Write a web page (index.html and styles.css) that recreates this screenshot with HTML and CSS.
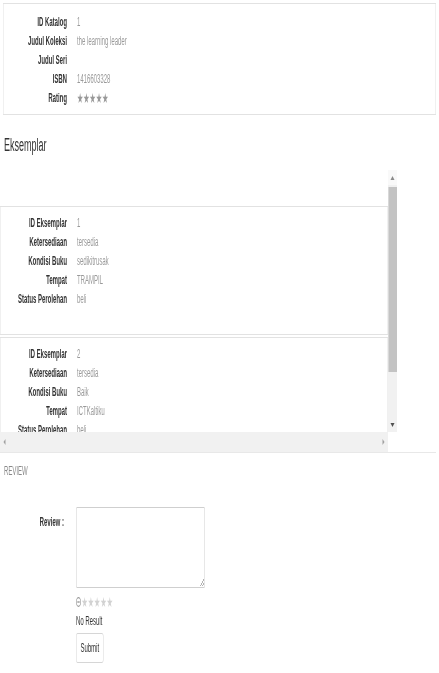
FILE: index.html
```
<!DOCTYPE html>
<html lang="id">
<head>
    <meta charset="UTF-8">
    <meta name="viewport" content="width=device-width, initial-scale=1.0">
    <title>Detail Katalog</title>
    <link rel="stylesheet" href="styles.css">
</head>
<body>
    <div class="screen">
    <div class="page">
        <!-- Catalog info -->
        <div class="panel info-panel">
            <dl class="fields">
                <div class="field"><dt>ID Katalog</dt><dd>1</dd></div>
                <div class="field"><dt>Judul Koleksi</dt><dd>the learning leader</dd></div>
                <div class="field"><dt>Judul Seri</dt><dd></dd></div>
                <div class="field"><dt>ISBN</dt><dd>1416603328</dd></div>
                <div class="field"><dt>Rating</dt><dd class="stars">★★★★★</dd></div>
            </dl>
        </div>

        <h3 class="section-title">Eksemplar</h3>

        <!-- Copies list with its scrollbars -->
        <div class="copies">
            <div class="copies-view">
                <div class="copies-list">
                    <div class="panel copy">
                        <dl class="fields">
                            <div class="field"><dt>ID Eksemplar</dt><dd>1</dd></div>
                            <div class="field"><dt>Ketersediaan</dt><dd>tersedia</dd></div>
                            <div class="field"><dt>Kondisi Buku</dt><dd>sedikitrusak</dd></div>
                            <div class="field"><dt>Tempat</dt><dd>TRAMPIL</dd></div>
                            <div class="field"><dt>Status Perolehan</dt><dd>beli</dd></div>
                        </dl>
                    </div>
                    <div class="panel copy">
                        <dl class="fields">
                            <div class="field"><dt>ID Eksemplar</dt><dd>2</dd></div>
                            <div class="field"><dt>Ketersediaan</dt><dd>tersedia</dd></div>
                            <div class="field"><dt>Kondisi Buku</dt><dd>Baik</dd></div>
                            <div class="field"><dt>Tempat</dt><dd>ICTKaltiku</dd></div>
                            <div class="field"><dt>Status Perolehan</dt><dd>beli</dd></div>
                        </dl>
                    </div>
                </div>
            </div>
            <div class="scrollbar scrollbar-v">
                <span class="sb-btn sb-up"><i class="arrow arrow-up"></i></span>
                <span class="sb-track"><span class="sb-thumb"></span></span>
                <span class="sb-btn sb-down"><i class="arrow arrow-down"></i></span>
            </div>
            <div class="scrollbar scrollbar-h">
                <span class="sb-btn sb-left"><i class="arrow arrow-left"></i></span>
                <span class="sb-track"></span>
                <span class="sb-btn sb-right"><i class="arrow arrow-right"></i></span>
            </div>
            <div class="sb-corner"></div>
        </div>

        <hr class="divider">

        <div class="review-title">REVIEW</div>

        <!-- Review form -->
        <form class="review-form" onsubmit="return false;">
            <div class="form-row">
                <label for="review" class="form-label">Review :</label>
                <div class="form-control-group">
                    <textarea id="review" class="review-input"></textarea>
                    <div class="rating-input">
                        <svg class="cancel-icon" viewBox="0 0 10 10" width="10" height="10">
                            <circle cx="5" cy="5" r="4.3" fill="none" stroke="#9a9a9a" stroke-width="1.3"/>
                            <rect x="2.6" y="4.3" width="4.8" height="1.4" fill="#9a9a9a"/>
                        </svg>
                        <span class="stars">★★★★★</span>
                    </div>
                    <div class="rating-result">No Result</div>
                    <button type="submit" class="btn">Submit</button>
                </div>
            </div>
        </form>
    </div>
    </div>
</body>
</html>
```

FILE: styles.css
```
* {
    margin: 0;
    padding: 0;
    box-sizing: border-box;
}

body {
    font-family: 'Liberation Sans', Arial, sans-serif;
    font-size: 12px;
    color: #333;
    background-color: #ffffff;
}

.screen {
    width: 439px;
    height: 673px;
    overflow: hidden;
}

/* the page is laid out wide and squeezed into the narrow window */
.page {
    width: 878px;
    transform: scaleX(0.5);
    transform-origin: 0 0;
    will-change: transform;
}

.panel {
    border: 1px solid #e2e2e2;
    background-color: #ffffff;
}

.info-panel {
    margin: 3px 6px 0 6px;
    padding: 8px 0 7px 0;
}

.fields .field {
    display: flex;
    height: 19px;
    align-items: center;
}

.fields dt {
    width: 127px;
    text-align: right;
    font-weight: bold;
    color: #333;
}

.fields dd {
    margin-left: 20px;
    color: #999;
}

.stars {
    font-family: 'DejaVu Sans', sans-serif;
    font-size: 14px;
    color: #d2d2d2;
}

.section-title {
    font-size: 18px;
    font-weight: normal;
    color: #333;
    line-height: 20px;
    margin: 20px 0 0 8px;
}

/* scrolling list of copies */
.copies {
    margin-top: 15px;
    display: grid;
    grid-template-columns: 776px 18px;
    grid-template-rows: 262px 20px;
    width: 794px;
}

.copies-view {
    overflow: hidden;
}

.copies-list {
    width: 776px;
    padding-top: 36px;
}

.copy {
    padding: 6px 0 26px 0;
    margin-bottom: 2px;
}

.copy .fields dt {
    width: 133px;
}

.scrollbar {
    display: flex;
    background-color: #f1f1f1;
}

.scrollbar-v {
    flex-direction: column;
}

.sb-btn {
    display: flex;
    align-items: center;
    justify-content: center;
    flex: none;
}

.scrollbar-v .sb-btn {
    height: 15px;
}

.sb-up {
    background-color: #f9f9f9;
}

.scrollbar-h .sb-btn {
    width: 18px;
}

.sb-track {
    flex: 1;
}

.sb-thumb {
    display: block;
    height: 185px;
    margin-top: 2px;
    background-color: #c3c3c3;
    border-left: 2px solid #d8d8d8;
}

.sb-corner {
    background-color: #ffffff;
}

.arrow {
    width: 0;
    height: 0;
    border: solid transparent;
}

.arrow-up {
    border-width: 0 4px 4px 4px;
    border-bottom-color: #8a8a8a;
}

.arrow-down {
    border-width: 4px 4px 0 4px;
    border-top-color: #505050;
}

.arrow-left {
    border-width: 3px 4px 3px 0;
    border-right-color: #a0a0a0;
}

.arrow-right {
    border-width: 3px 0 3px 4px;
    border-left-color: #a0a0a0;
}

.divider {
    border: none;
    border-top: 1px solid #e8e8e8;
    width: 872px;
}

.review-title {
    margin: 9px 0 0 8px;
    line-height: 18px;
    color: #888;
    font-size: 12px;
}

.review-form {
    margin-top: 27px;
}

.form-row {
    display: flex;
    align-items: flex-start;
}

.form-label {
    width: 128px;
    text-align: right;
    font-weight: bold;
    color: #333;
    padding-top: 8px;
}

.form-control-group {
    margin-left: 24px;
    display: flex;
    flex-direction: column;
    align-items: flex-start;
}

.review-input {
    width: 258px;
    height: 81px;
    border: 1px solid #cfcfcf;
    border-radius: 2px;
    resize: both;
    font-family: inherit;
    font-size: 12px;
}

.rating-input {
    display: flex;
    align-items: center;
    height: 17px;
    margin-top: 5px;
}

.cancel-icon {
    margin-right: 1px;
}

.rating-result {
    margin-top: 4px;
    line-height: 14px;
    color: #333;
}

.btn {
    margin-top: 5px;
    height: 30px;
    padding: 0 8px;
    background-color: #ffffff;
    border: 1px solid #d6d6d6;
    border-radius: 3px;
    font-family: inherit;
    font-size: 12px;
    color: #333;
}
```
